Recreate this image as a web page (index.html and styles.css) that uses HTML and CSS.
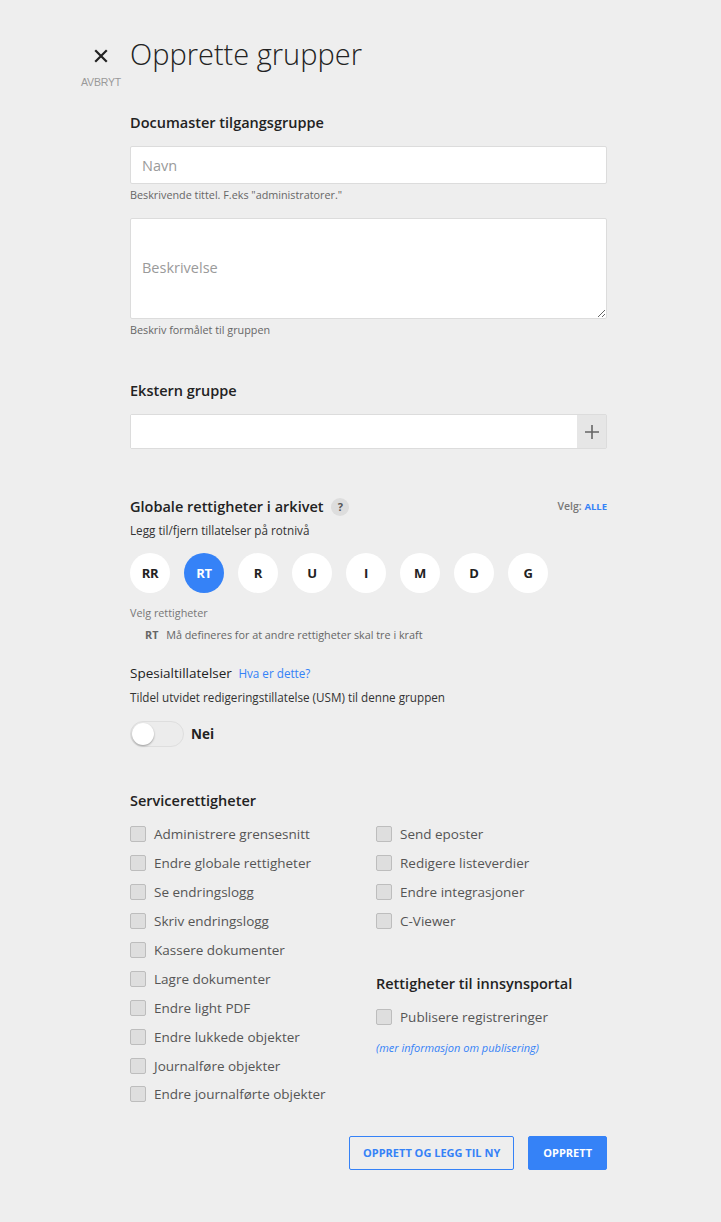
FILE: index.html
```html
<!DOCTYPE html>
<html lang="no">
<head>
    <meta charset="UTF-8">
    <meta name="viewport" content="width=device-width, initial-scale=1.0">
    <title>Opprette grupper</title>
    <link rel="stylesheet" href="styles.css">
</head>
<body>
    <div id="header">
        <div id="cancel">
            <svg width="14" height="14" viewBox="0 0 14 14">
                <path d="M2 2 L12 12 M12 2 L2 12" stroke="#222" stroke-width="2.2" stroke-linecap="square"/>
            </svg>
            <div id="cancel-text">AVBRYT</div>
        </div>
        <h1 id="title">Opprette grupper</h1>
    </div>

    <div id="form">
        <div class="section-title">Documaster tilgangsgruppe</div>
        <input type="text" class="text-input" placeholder="Navn">
        <div class="helper">Beskrivende tittel. F.eks "administratorer."</div>
        <textarea class="text-area" placeholder="Beskrivelse"></textarea>
        <div class="helper">Beskriv formålet til gruppen</div>

        <div class="section-title" id="external-title">Ekstern gruppe</div>
        <div id="external-row">
            <input type="text" id="external-input">
            <div id="add-button">
                <svg width="16" height="16" viewBox="0 0 16 16">
                    <path d="M8 1 V15 M1 8 H15" stroke="#666" stroke-width="1.6"/>
                </svg>
            </div>
        </div>

        <div id="global-head">
            <div class="section-title">Globale rettigheter i arkivet <span id="help">?</span></div>
            <div id="select-all">Velg: <span class="blue">ALLE</span></div>
        </div>
        <div class="subtext" id="root-text">Legg til/fjern tillatelser på rotnivå</div>
        <div id="rights">
            <div class="right-circle">RR</div>
            <div class="right-circle active">RT</div>
            <div class="right-circle">R</div>
            <div class="right-circle">U</div>
            <div class="right-circle">I</div>
            <div class="right-circle">M</div>
            <div class="right-circle">D</div>
            <div class="right-circle">G</div>
        </div>
        <div id="choose-rights">Velg rettigheter</div>
        <div id="rt-note"><b>RT</b> Må defineres for at andre rettigheter skal tre i kraft</div>

        <div id="special-title">Spesialtillatelser <span class="link">Hva er dette?</span></div>
        <div class="subtext" id="special-text">Tildel utvidet redigeringstillatelse (USM) til denne gruppen</div>
        <div id="toggle-row">
            <div id="toggle"><div id="knob"></div></div>
            <span id="toggle-label">Nei</span>
        </div>

        <div class="section-title" id="service-title">Servicerettigheter</div>
        <div id="service-cols">
            <div class="col" id="col-left">
                <label class="check-row"><span class="box"></span>Administrere grensesnitt</label>
                <label class="check-row"><span class="box"></span>Endre globale rettigheter</label>
                <label class="check-row"><span class="box"></span>Se endringslogg</label>
                <label class="check-row"><span class="box"></span>Skriv endringslogg</label>
                <label class="check-row"><span class="box"></span>Kassere dokumenter</label>
                <label class="check-row"><span class="box"></span>Lagre dokumenter</label>
                <label class="check-row"><span class="box"></span>Endre light PDF</label>
                <label class="check-row"><span class="box"></span>Endre lukkede objekter</label>
                <label class="check-row"><span class="box"></span>Journalføre objekter</label>
                <label class="check-row"><span class="box"></span>Endre journalførte objekter</label>
            </div>
            <div class="col">
                <label class="check-row"><span class="box"></span>Send eposter</label>
                <label class="check-row"><span class="box"></span>Redigere listeverdier</label>
                <label class="check-row"><span class="box"></span>Endre integrasjoner</label>
                <label class="check-row"><span class="box"></span>C-Viewer</label>
                <div class="section-title" id="portal-title">Rettigheter til innsynsportal</div>
                <label class="check-row"><span class="box"></span>Publisere registreringer</label>
                <div id="more-info">(mer informasjon om publisering)</div>
            </div>
        </div>

        <div id="actions">
            <button class="button outline">OPPRETT OG LEGG TIL NY</button>
            <button class="button primary">OPPRETT</button>
        </div>
    </div>
</body>
</html>
```

FILE: styles.css
```css
body {
    margin: 0;
    background-color: #eeeeee;
    font-family: "Open Sans", Arial, sans-serif;
    color: #222;
}

#header {
    display: flex;
    align-items: flex-start;
    padding: 34px 0 0 81px;
}

#cancel {
    width: 40px;
    display: flex;
    flex-direction: column;
    align-items: center;
    padding-top: 15px;
}

#cancel-text {
    margin-top: 13px;
    font-family: "Liberation Sans", Arial, sans-serif;
    font-size: 10.5px;
    color: #999;
    letter-spacing: -0.2px;
}

#title {
    margin: 0 0 0 9px;
    font-size: 29px;
    font-weight: 300;
    line-height: 40px;
    color: #222;
}

#form {
    width: 477px;
    margin: 25px 0 0 130px;
}

.section-title {
    font-size: 14.5px;
    font-weight: 600;
    line-height: 20px;
    color: #222;
}

.text-input {
    display: block;
    box-sizing: border-box;
    width: 100%;
    height: 38px;
    margin-top: 13px;
    padding: 0 11px;
    border: 1px solid #dcdcdc;
    border-radius: 2px;
    background: #fff;
    font-family: inherit;
    font-size: 14.5px;
}

.text-input::placeholder,
.text-area::placeholder {
    color: #9a9a9a;
}

.helper {
    margin-top: 3px;
    font-size: 10.8px;
    line-height: 15px;
    color: #666;
}

.text-area {
    display: block;
    box-sizing: border-box;
    width: 100%;
    height: 101px;
    margin-top: 16px;
    padding: 38px 11px 0;
    border: 1px solid #dcdcdc;
    border-radius: 2px;
    background: #fff;
    font-family: inherit;
    font-size: 14.5px;
    line-height: 22px;
    resize: vertical;
}

#external-title {
    margin-top: 44px;
}

#external-row {
    display: flex;
    height: 35px;
    margin-top: 13px;
    border: 1px solid #dcdcdc;
    border-radius: 2px;
    box-sizing: border-box;
}

#external-input {
    flex: 1;
    border: none;
    background: #fff;
    padding: 0 11px;
    font-family: inherit;
}

#add-button {
    width: 29px;
    background: #e6e6e6;
    display: flex;
    align-items: center;
    justify-content: center;
}

#global-head {
    display: flex;
    justify-content: space-between;
    align-items: center;
    margin-top: 48px;
}

#help {
    display: inline-block;
    width: 18px;
    height: 18px;
    margin-left: 4px;
    border-radius: 50%;
    background: #dddddd;
    color: #555;
    font-size: 11px;
    font-weight: 700;
    line-height: 18px;
    text-align: center;
    vertical-align: 1px;
}

#select-all {
    font-size: 10.5px;
    font-weight: 600;
    color: #777;
    margin-top: -2px;
}

.blue {
    color: #3582f7;
    font-weight: 700;
    font-size: 9.5px;
}

.subtext {
    font-size: 11.7px;
    line-height: 16px;
    color: #333;
}

#root-text {
    margin-top: 5px;
}

#rights {
    display: flex;
    gap: 14px;
    margin-top: 15px;
}

.right-circle {
    width: 40px;
    height: 40px;
    border-radius: 50%;
    background: #fff;
    display: flex;
    align-items: center;
    justify-content: center;
    font-size: 13px;
    font-weight: 700;
    color: #222;
    letter-spacing: -0.3px;
}

.right-circle.active {
    background: #3582f7;
    color: #fff;
}

#choose-rights {
    margin-top: 12px;
    font-size: 10.8px;
    line-height: 15px;
    color: #777;
}

#rt-note {
    margin-top: 7px;
    padding-left: 15px;
    font-size: 10.8px;
    line-height: 15px;
    color: #666;
}

#rt-note b {
    font-weight: 700;
    margin-right: 5px;
}

#special-title {
    margin-top: 21px;
    font-size: 13.5px;
    line-height: 20px;
    color: #222;
}

.link {
    margin-left: 3px;
    font-size: 11.7px;
    color: #3582f7;
}

#special-text {
    margin-top: 6px;
}

#toggle-row {
    display: flex;
    align-items: center;
    gap: 7px;
    margin-top: 16px;
}

#toggle {
    position: relative;
    box-sizing: border-box;
    width: 54px;
    height: 26px;
    border: 1px solid #dedede;
    border-radius: 13px;
    background: #ececec;
}

#knob {
    position: absolute;
    top: 1px;
    left: 1px;
    width: 22px;
    height: 22px;
    border-radius: 50%;
    background: #fff;
    box-shadow: 0 1px 2px rgba(0, 0, 0, 0.35);
}

#toggle-label {
    font-size: 13.5px;
    font-weight: 700;
    color: #222;
}

#service-title {
    margin-top: 44px;
}

#service-cols {
    display: flex;
    margin-top: 9px;
}

.col {
    display: flex;
    flex-direction: column;
}

#col-left {
    width: 246px;
}

.check-row {
    display: flex;
    align-items: center;
    height: 28.9px;
    font-size: 13.5px;
    color: #555;
}

.box {
    box-sizing: border-box;
    width: 16px;
    height: 16px;
    margin-right: 8px;
    border: 1px solid #bdbdbd;
    border-radius: 2px;
    background: #dedede;
}

#portal-title {
    margin-top: 38px;
    margin-bottom: 9px;
}

#more-info {
    margin-top: 9px;
    font-size: 11px;
    font-style: italic;
    line-height: 15px;
    color: #3582f7;
}

#actions {
    display: flex;
    justify-content: flex-end;
    gap: 14px;
    margin-top: 27px;
}

.button {
    height: 34px;
    padding: 0 14px;
    border-radius: 2px;
    font-family: inherit;
    font-size: 11px;
    font-weight: 700;
    cursor: pointer;
}

.button.outline {
    padding: 0 13px;
    background: transparent;
    border: 1px solid #3582f7;
    color: #3582f7;
}

.button.primary {
    background: #3582f7;
    border: 1px solid #3582f7;
    color: #fff;
}
```
